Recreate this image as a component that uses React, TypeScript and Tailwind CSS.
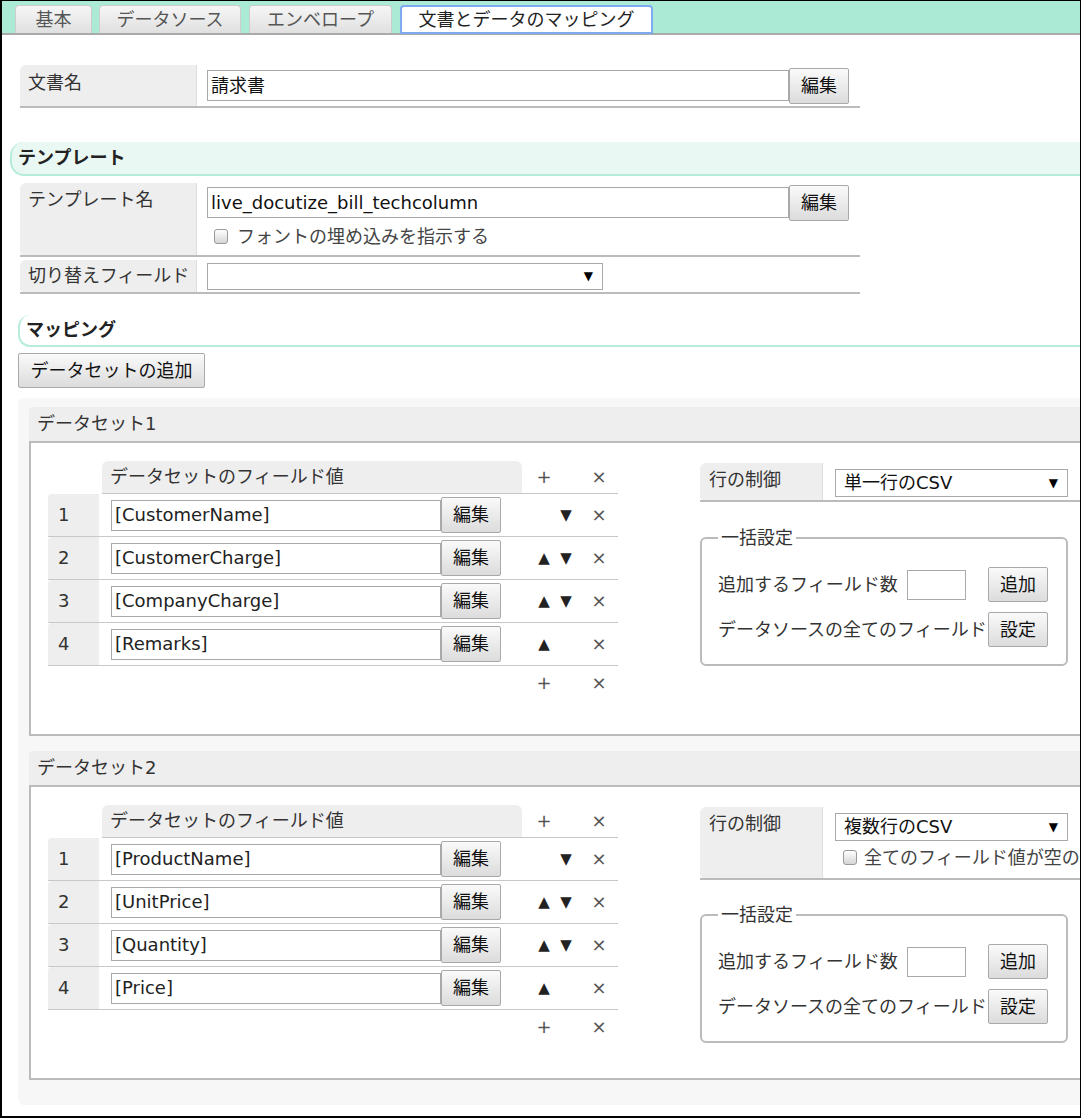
import React from 'react';

const FONT = "font-['DejaVu_Sans','Noto_Sans_CJK_JP',sans-serif]";

const DATASETS = [
  {
    title: 'データセット1',
    fields: ['[CustomerName]', '[CustomerCharge]', '[CompanyCharge]', '[Remarks]'],
    control: '単一行のCSV',
    check: false,
  },
  {
    title: 'データセット2',
    fields: ['[ProductName]', '[UnitPrice]', '[Quantity]', '[Price]'],
    control: '複数行のCSV',
    check: true,
  },
];

function Btn({ label, className = '' }: { label: string; className?: string }) {
  return (
    <div
      className={`flex items-center justify-center shrink-0 border border-[#a9a9a9] rounded-[2px] bg-linear-to-b from-[#fafafa] to-[#dcdcdc] text-[#111] ${className}`}
    >
      {label}
    </div>
  );
}

function CheckBox() {
  return (
    <span className="inline-block w-[14px] h-[15px] shrink-0 border border-[#9a9a9a] rounded-[3px] bg-linear-to-b from-[#ffffff] to-[#d6d6d6]" />
  );
}

function Select({ value, className = '' }: { value: string; className?: string }) {
  return (
    <div className={`flex items-center justify-between border border-[#a9a9a9] bg-white pl-[8px] pr-[9px] ${className}`}>
      <span className="text-[#111]">{value}</span>
      <span className="text-[12px] text-black">▼</span>
    </div>
  );
}

function Tab({ label, active = false, className = '' }: { label: string; active?: boolean; className?: string }) {
  return active ? (
    <div className={`h-[29px] flex items-center justify-center rounded-t-[4px] border-2 border-[#7eaaf0] bg-white text-[#222] ${className}`}>
      {label}
    </div>
  ) : (
    <div
      className={`h-[28px] flex items-center justify-center rounded-t-[4px] border border-b-0 border-[#cccccc] bg-linear-to-b from-[#f6f6f6] to-[#e0e0e0] text-[#555] ${className}`}
    >
      {label}
    </div>
  );
}

function FieldTable({ fields }: { fields: string[] }) {
  return (
    <div className="w-[570px] shrink-0">
      <div className="flex h-[33px]">
        <div className="w-[54px]" />
        <div className="flex flex-1 border-b border-[#c8c8c8]">
          <div className="w-[420px] bg-[#eeeeee] rounded-t-[6px] pl-[8px] flex items-center">データセットのフィールド値</div>
          <div className="w-[58px] pl-[11px] flex items-center text-[#555]">
            <span className="w-[22px] text-center">+</span>
          </div>
          <div className="w-[38px] flex items-center justify-center text-[#555]">×</div>
        </div>
      </div>
      {fields.map((f, i) => (
        <div key={f} className="flex h-[43px] border-b border-[#c8c8c8]">
          <div className="w-[51px] bg-[#eeeeee] rounded-tl-[4px] pl-[10px] flex items-center">{i + 1}</div>
          <div className="w-[423px] pl-[12px] flex items-center">
            <div className="w-[330px] h-[31px] border border-[#a9a9a9] pl-[3px] flex items-center text-[#222]">{f}</div>
            <Btn label="編集" className="w-[60px] h-[36px]" />
          </div>
          <div className="w-[58px] pl-[11px] flex items-center text-[15px] text-[#222]">
            <span className="w-[22px] text-center">{i > 0 ? '▲' : ''}</span>
            <span className="w-[22px] text-center">{i < fields.length - 1 ? '▼' : ''}</span>
          </div>
          <div className="w-[38px] flex items-center justify-center text-[#555]">×</div>
        </div>
      ))}
      <div className="flex h-[34px]">
        <div className="w-[474px]" />
        <div className="w-[58px] pl-[11px] flex items-center text-[#555]">
          <span className="w-[22px] text-center">+</span>
        </div>
        <div className="w-[38px] flex items-center justify-center text-[#555]">×</div>
      </div>
    </div>
  );
}

function RightPanel({ control, check }: { control: string; check: boolean }) {
  return (
    <div className="ml-[82px] mt-[2px] w-[368px] shrink-0">
      <div className="flex w-[440px] border-b-2 border-[#bbbbbb]">
        <div
          className={`w-[123px] shrink-0 bg-[#eeeeee] rounded-tl-[6px] rounded-bl-[4px] border-r border-[#dddddd] pl-[9px] pt-[6px] ${
            check ? 'h-[71px]' : 'h-[37px]'
          }`}
        >
          行の制御
        </div>
        <div className="pl-[12px] pt-[6px]">
          <Select value={control} className="w-[233px] h-[28px]" />
          {check && (
            <div className="flex items-center gap-[7px] mt-[6px] pl-[8px] whitespace-nowrap text-[#444]">
              <CheckBox />
              <span>全てのフィールド値が空の行を出力しない</span>
            </div>
          )}
        </div>
      </div>
      <fieldset className={`${check ? 'mt-[24px]' : 'mt-[25px]'} border-2 border-[#bbbbbb] rounded-[6px] px-[16px] pb-[17px]`}>
        <legend className="px-[3px] leading-[22px]">一括設定</legend>
        <div className="flex items-center h-[35px] mt-[18px]">
          <span className="w-[189px]">追加するフィールド数</span>
          <div className="w-[59px] h-[30px] border border-[#a9a9a9] bg-white" />
          <Btn label="追加" className="ml-[22px] w-[60px] h-[35px]" />
        </div>
        <div className="flex items-center h-[35px] mt-[10px]">
          <span className="w-[270px] whitespace-nowrap">データソースの全てのフィールド</span>
          <Btn label="設定" className="w-[60px] h-[35px]" />
        </div>
      </fieldset>
    </div>
  );
}

function Dataset({ ds, first }: { ds: (typeof DATASETS)[number]; first: boolean }) {
  return (
    <div className={first ? '' : 'mt-[15px]'}>
      <div className="h-[36px] bg-[#eeeeee] rounded-tl-[4px] border-b-2 border-[#bbbbbb] pl-[8px] flex items-center">
        {ds.title}
      </div>
      <div className="flex items-start bg-white border-l-2 border-b-2 border-[#bbbbbb] pt-[18px] pl-[17px] pb-[34px]">
        <FieldTable fields={ds.fields} />
        <RightPanel control={ds.control} check={ds.check} />
      </div>
    </div>
  );
}

export default function App() {
  return (
    <div
      className={`w-[1081px] h-[1118px] overflow-hidden bg-white border-l-2 border-t border-r border-b-2 border-black text-[18px] text-[#333] leading-[1.2] ${FONT}`}
    >
      <div className="h-[34px] bg-[#abebd6] border-b-2 border-[#aaaaaa] flex items-end pl-[13px]">
        <Tab label="基本" className="w-[77px]" />
        <Tab label="データソース" className="ml-[7px] w-[142px]" />
        <Tab label="エンベロープ" className="ml-[8px] w-[143px]" />
        <Tab label="文書とデータのマッピング" active className="ml-[8px] w-[253px] mb-[-1px]" />
      </div>

      <div className="mt-[30px] ml-[18px] w-[840px] flex border-b-2 border-[#bbbbbb]">
        <div className="w-[177px] h-[41px] shrink-0 bg-[#eeeeee] rounded-tl-[6px] border-r border-[#dddddd] pl-[8px] pt-[7px]">
          文書名
        </div>
        <div className="pl-[10px] flex items-center">
          <div className="w-[582px] h-[31px] border border-[#a9a9a9] pl-[3px] flex items-center text-[#111]">請求書</div>
          <Btn label="編集" className="w-[60px] h-[36px]" />
        </div>
      </div>

      <div className="mt-[34px] ml-[8px] h-[34px] rounded-l-[14px] border-l-2 border-b-2 border-[#b7ecda] bg-[#eaf8f3] pl-[6px] flex items-center font-bold text-[#222]">
        テンプレート
      </div>

      <div className="mt-[7px] ml-[18px] w-[840px] flex border-b-2 border-[#bbbbbb]">
        <div className="w-[177px] h-[72px] shrink-0 bg-[#eeeeee] rounded-tl-[6px] rounded-bl-[4px] border-r border-[#dddddd] pl-[8px] pt-[6px]">
          テンプレート名
        </div>
        <div className="pl-[10px] pt-[1px]">
          <div className="flex items-center h-[37px]">
            <div className="w-[582px] h-[31px] border border-[#a9a9a9] pl-[3px] flex items-center text-[#111]">
              live_docutize_bill_techcolumn
            </div>
            <Btn label="編集" className="w-[60px] h-[36px]" />
          </div>
          <div className="flex items-center gap-[9px] pl-[7px] mt-[5px] text-[#444]">
            <CheckBox />
            <span>フォントの埋め込みを指示する</span>
          </div>
        </div>
      </div>

      <div className="mt-[3px] ml-[18px] w-[840px] flex border-b-2 border-[#bbbbbb]">
        <div className="w-[177px] h-[32px] shrink-0 bg-[#eeeeee] rounded-tl-[6px] rounded-bl-[4px] border-r border-[#dddddd] pl-[8px] flex items-center">
          切り替えフィールド
        </div>
        <div className="pl-[10px] flex items-center">
          <Select value="" className="w-[396px] h-[27px]" />
        </div>
      </div>

      <div className="mt-[21px] ml-[16px] h-[32px] rounded-l-[12px] border-l-2 border-b-2 border-[#b7ecda] pl-[6px] flex items-center font-bold text-[#222]">
        マッピング
      </div>

      <Btn label="データセットの追加" className="mt-[6px] ml-[16px] w-[187px] h-[35px]" />

      <div className="mt-[10px] ml-[16px] w-[1100px] bg-[#f7f7f7] rounded-[6px] pt-[9px] pl-[11px] pb-[25px]">
        {DATASETS.map((ds, i) => (
          <Dataset key={ds.title} ds={ds} first={i === 0} />
        ))}
      </div>
    </div>
  );
}
